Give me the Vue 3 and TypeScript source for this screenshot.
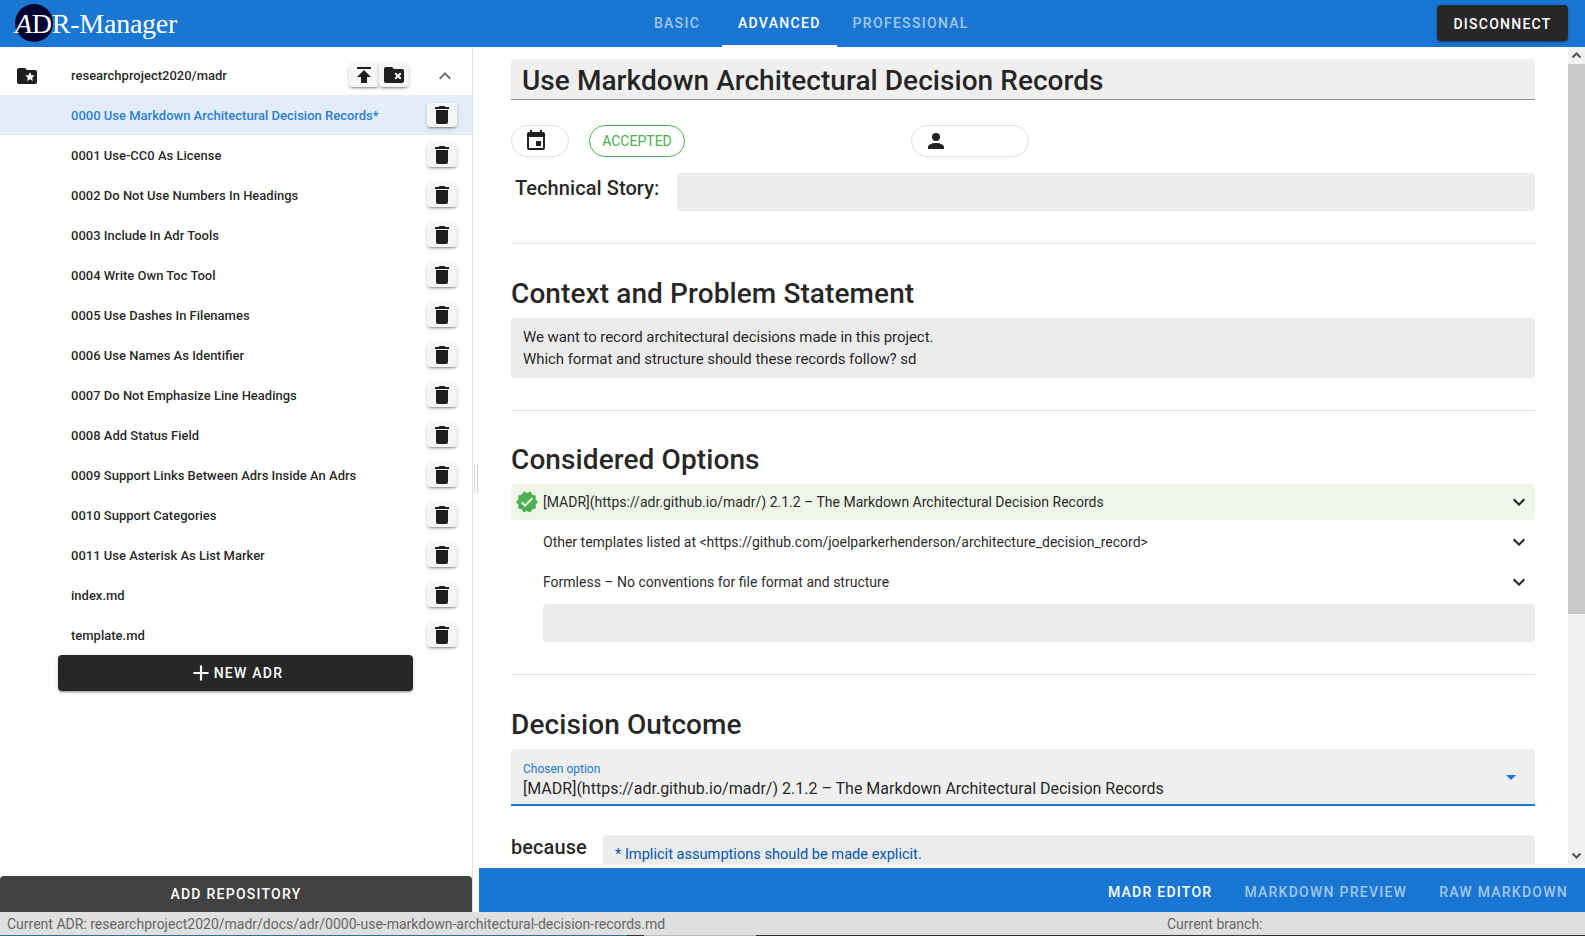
<template>
  <div class="app">
    <header class="topbar">
      <div class="logo"><span class="logo-disc"></span><span class="logo-text"><em>A</em>DR-Manager</span></div>
      <nav class="tabs">
        <a v-for="tab in modes" :key="tab" class="tab" :class="{ active: tab === 'ADVANCED' }">{{ tab }}</a>
      </nav>
      <button class="dark-btn disconnect">DISCONNECT</button>
    </header>

    <div class="workspace">
      <aside class="sidebar">
        <div class="repo-row">
          <svg class="repo-icon" viewBox="0 0 24 24"><path :d="icons.folderStar" /></svg>
          <span class="repo-name">researchproject2020/madr</span>
          <button class="mini-btn"><svg viewBox="0 0 24 24"><path :d="icons.publish" /></svg></button>
          <button class="mini-btn"><svg viewBox="0 0 24 24"><path :d="icons.folderRemove" /></svg></button>
          <svg class="repo-chevron" viewBox="0 0 24 24"><path :d="icons.chevronUp" /></svg>
        </div>
        <ul class="adr-list">
          <li v-for="(file, i) in files" :key="file" class="adr-row" :class="{ current: i === 0 }">
            <span>{{ file }}</span>
            <button class="mini-btn"><svg viewBox="0 0 24 24"><path :d="icons.trash" /></svg></button>
          </li>
        </ul>
        <button class="dark-btn new-adr">
          <svg viewBox="0 0 24 24"><path :d="icons.plus" /></svg>
          NEW ADR
        </button>
        <button class="add-repo">ADD REPOSITORY</button>
      </aside>

      <div class="splitter"><i></i></div>

      <main class="main">
        <div class="viewport">
          <div class="editor">
            <div class="title-field">Use Markdown Architectural Decision Records</div>

            <div class="chips">
              <span class="chip date"><svg viewBox="0 0 24 24"><path :d="icons.calendar" /></svg></span>
              <span class="chip status">ACCEPTED</span>
              <span class="chip person"><svg viewBox="0 0 24 24"><path :d="icons.account" /></svg></span>
            </div>

            <div class="story">
              <span class="label">Technical Story:</span>
              <div class="field blank"></div>
            </div>

            <hr />

            <h2>Context and Problem Statement</h2>
            <div class="field context">
              We want to record architectural decisions made in this project.<br />
              Which format and structure should these records follow? sd
            </div>

            <hr />

            <h2 class="options-title">Considered Options</h2>
            <div
              v-for="(opt, i) in options"
              :key="opt"
              class="option"
              :class="{ chosen: i === 0 }"
            >
              <svg v-if="i === 0" class="check" viewBox="0 0 24 24"><path :d="icons.decagram" /></svg>
              <span>{{ opt }}</span>
              <svg class="expand" viewBox="0 0 24 24"><path :d="icons.chevronDown" /></svg>
            </div>
            <div class="field blank new-option"></div>

            <hr />

            <h2>Decision Outcome</h2>
            <div class="select">
              <div>
                <div class="select-label">Chosen option</div>
                <div class="select-value">{{ options[0] }}</div>
              </div>
              <svg viewBox="0 0 24 24"><path :d="icons.menuDown" /></svg>
            </div>

            <div class="because">
              <span class="label">because</span>
              <div class="field explain">* Implicit assumptions should be made explicit.</div>
            </div>
          </div>

          <div class="scrollbar">
            <svg class="arrow" viewBox="0 0 17 17"><path d="M4.5 10.5 8.5 6.5 12.5 10.5" /></svg>
            <div class="thumb"></div>
            <svg class="arrow bottom" viewBox="0 0 17 17"><path d="M4.5 6.5 8.5 10.5 12.5 6.5" /></svg>
          </div>
        </div>

        <footer class="view-tabs">
          <a
            v-for="view in views"
            :key="view"
            class="view-tab"
            :class="{ active: view === 'MADR EDITOR' }"
          >{{ view }}</a>
        </footer>
      </main>
    </div>

    <div class="statusbar">
      <span class="status-adr">Current ADR: researchproject2020/madr/docs/adr/0000-use-markdown-architectural-decision-records.md</span>
      <span>Current branch:</span>
    </div>
    <div class="desk-strip"></div>
  </div>
</template>

<script setup lang="ts">
const modes: string[] = ['BASIC', 'ADVANCED', 'PROFESSIONAL']
const views: string[] = ['MADR EDITOR', 'MARKDOWN PREVIEW', 'RAW MARKDOWN']

const files: string[] = [
  '0000 Use Markdown Architectural Decision Records*',
  '0001 Use-CC0 As License',
  '0002 Do Not Use Numbers In Headings',
  '0003 Include In Adr Tools',
  '0004 Write Own Toc Tool',
  '0005 Use Dashes In Filenames',
  '0006 Use Names As Identifier',
  '0007 Do Not Emphasize Line Headings',
  '0008 Add Status Field',
  '0009 Support Links Between Adrs Inside An Adrs',
  '0010 Support Categories',
  '0011 Use Asterisk As List Marker',
  'index.md',
  'template.md',
]

const options: string[] = [
  '[MADR](https://adr.github.io/madr/) 2.1.2 – The Markdown Architectural Decision Records',
  'Other templates listed at <https://github.com/joelparkerhenderson/architecture_decision_record>',
  'Formless – No conventions for file format and structure',
]

const icons = {
  trash: 'M19,4H15.5L14.5,3H9.5L8.5,4H5V6H19M6,19A2,2 0 0,0 8,21H16A2,2 0 0,0 18,19V7H6V19Z',
  calendar: 'M19,19H5V8H19M16,1V3H8V1H6V3H5C3.89,3 3,3.89 3,5V19A2,2 0 0,0 5,21H19A2,2 0 0,0 21,19V5C21,3.89 20.1,3 19,3H18V1M17,12H12V17H17V12Z',
  account: 'M12,4A4,4 0 0,1 16,8A4,4 0 0,1 12,12A4,4 0 0,1 8,8A4,4 0 0,1 12,4M12,14C16.42,14 20,15.79 20,18V20H4V18C4,15.79 7.58,14 12,14Z',
  folderStar: 'M20,6H12L10,4H4A2,2 0 0,0 2,6V18A2,2 0 0,0 4,20H20A2,2 0 0,0 22,18V8A2,2 0 0,0 20,6M17.94,17L15,15.28L12.06,17L12.84,13.67L10.25,11.43L13.66,11.14L15,8L16.34,11.14L19.75,11.43L17.16,13.67L17.94,17Z',
  folderRemove: 'M10 4L12 6H20C21.1 6 22 6.9 22 8V18C22 19.1 21.1 20 20 20H4C2.9 20 2 19.1 2 18L2 6C2 4.9 2.9 4 4 4H10M12.46 10.88L14.59 13L12.46 15.12L13.88 16.54L16 14.41L18.12 16.54L19.54 15.12L17.41 13L19.54 10.88L18.12 9.46L16 11.59L13.88 9.46L12.46 10.88Z',
  publish: 'M5,4V6H19V4H5M5,14H9V20H15V14H19L12,7L5,14Z',
  chevronUp: 'M7.41,15.41L12,10.83L16.59,15.41L18,14L12,8L6,14L7.41,15.41Z',
  chevronDown: 'M7.41,8.58L12,13.17L16.59,8.58L18,10L12,16L6,10L7.41,8.58Z',
  decagram: 'M23,12L20.56,9.22L20.9,5.54L17.29,4.72L15.4,1.54L12,3L8.6,1.54L6.71,4.71L3.1,5.53L3.44,9.21L1,12L3.44,14.78L3.1,18.47L6.71,19.29L8.6,22.47L12,21L15.4,22.46L17.29,19.28L20.9,18.46L20.56,14.78L23,12M10,17L6,13L7.41,11.59L10,14.17L16.59,7.58L18,9L10,17Z',
  menuDown: 'M7,10L12,15L17,10H7Z',
  plus: 'M19,13H13V19H11V13H5V11H11V5H13V11H19V13Z',
}
</script>

<style>
html,
body {
  margin: 0;
  overflow: hidden;
}
</style>

<style scoped>
.app {
  width: 1585px;
  height: 936px;
  display: flex;
  flex-direction: column;
  overflow: hidden;
  font-family: Roboto, "Liberation Sans", sans-serif;
  color: rgba(0, 0, 0, 0.87);
  background: #fff;
}

button {
  font-family: inherit;
  border: 0;
  padding: 0;
  cursor: pointer;
}

/* Top bar */

.topbar {
  height: 47px;
  flex: none;
  display: grid;
  grid-template-columns: 632px auto 1fr;
  align-items: center;
  background: #1976d2;
}

.logo {
  position: relative;
  padding-left: 15px;
  height: 47px;
  display: flex;
  align-items: center;
}

.logo-disc {
  position: absolute;
  left: 15px;
  top: 4px;
  width: 38px;
  height: 38px;
  border-radius: 50%;
  background: #02022e;
}

.logo-text {
  position: relative;
  font-family: "Liberation Serif", serif;
  font-size: 28px;
  letter-spacing: -0.25px;
  color: #fff;
  white-space: nowrap;
}

.tabs {
  display: flex;
  height: 47px;
}

.tab {
  display: flex;
  align-items: center;
  justify-content: center;
  min-width: 90px;
  box-sizing: border-box;
  padding: 0 16px 1px;
  font-size: 14px;
  font-weight: 500;
  letter-spacing: 1.3px;
  color: rgba(255, 255, 255, 0.6);
}

.tab.active {
  color: #fff;
  box-shadow: inset 0 -2px 0 #fff;
}

.dark-btn {
  background: #272727;
  color: #fff;
  border-radius: 4px;
  font-size: 14px;
  font-weight: 500;
  letter-spacing: 1.25px;
  box-shadow: 0 3px 1px -2px rgba(0, 0, 0, 0.2), 0 2px 2px 0 rgba(0, 0, 0, 0.14), 0 1px 5px 0 rgba(0, 0, 0, 0.12);
}

.disconnect {
  justify-self: end;
  width: 131px;
  height: 36px;
  margin-right: 17px;
  margin-top: -1px;
  padding-top: 1px;
}

/* Sidebar */

.workspace {
  flex: 1;
  min-height: 0;
  display: flex;
}

.sidebar {
  width: 473px;
  flex: none;
  box-sizing: border-box;
  border-right: 1px solid #e4e4e4;
  display: flex;
  flex-direction: column;
}

.repo-row {
  height: 48px;
  flex: none;
  display: flex;
  align-items: center;
  padding: 9px 0 0 15px;
  box-sizing: border-box;
  font-size: 13px;
  font-weight: 500;
}

.repo-icon {
  width: 24px;
  height: 24px;
  fill: #1e1e1e;
  margin-right: 32px;
}

.repo-name {
  flex: 1;
}

.mini-btn {
  width: 30px;
  height: 24px;
  display: flex;
  align-items: center;
  justify-content: center;
  background: #f5f5f5;
  border-radius: 4px;
  box-shadow: 0 3px 1px -2px rgba(0, 0, 0, 0.2), 0 2px 2px 0 rgba(0, 0, 0, 0.14), 0 1px 5px 0 rgba(0, 0, 0, 0.12);
}

.mini-btn svg {
  width: 24px;
  height: 24px;
  fill: #1e1e1e;
}

.repo-row .mini-btn {
  margin-top: -1px;
}

.repo-chevron {
  width: 24px;
  height: 24px;
  fill: #6f6f6f;
  margin: 0 15px 0 24px;
}

.adr-list {
  list-style: none;
  margin: 0;
  padding: 0;
}

.adr-row {
  height: 40px;
  display: flex;
  align-items: center;
  justify-content: space-between;
  padding: 0 15px 0 71px;
  font-size: 13px;
  font-weight: 500;
}

.adr-row.current {
  background: #e3edf9;
  color: #2c7fd6;
}

.new-adr {
  flex: none;
  align-self: flex-start;
  width: 355px;
  height: 36px;
  margin-left: 58px;
  display: flex;
  align-items: center;
  justify-content: center;
}

.new-adr svg {
  width: 26px;
  height: 26px;
  fill: #fff;
}

.add-repo {
  margin-top: auto;
  height: 36px;
  flex: none;
  background: #424242;
  color: #fff;
  border-radius: 4px 4px 0 0;
  font-size: 14px;
  font-weight: 500;
  letter-spacing: 1.25px;
}

/* Splitter between the panes */

.splitter {
  width: 6px;
  flex: none;
  display: flex;
  align-items: center;
  justify-content: center;
}

.splitter i {
  display: block;
  width: 2px;
  height: 29px;
  border-left: 1px solid #d8d8d8;
  border-right: 1px solid #d8d8d8;
}

/* Editor */

.main {
  flex: 1;
  min-width: 0;
  display: flex;
  flex-direction: column;
}

.viewport {
  flex: 1;
  min-height: 0;
  display: flex;
  overflow: hidden;
  box-shadow: 0 2px 4px rgba(0, 0, 0, 0.06);
  margin-bottom: 4px;
}

.editor {
  flex: 1;
  min-width: 0;
  padding: 12px 33px 0 32px;
  overflow: hidden;
}

.title-field {
  height: 41px;
  box-sizing: border-box;
  padding-left: 11px;
  background: #efefef;
  border-bottom: 1px solid #8c8c8c;
  border-radius: 4px 4px 0 0;
  font-size: 28px;
  font-weight: 500;
  line-height: 44px;
  letter-spacing: 0.05px;
}

.chips {
  display: flex;
  margin-top: 25px;
}

.chip {
  height: 32px;
  box-sizing: border-box;
  display: flex;
  align-items: center;
  border: 1px solid #e0e0e0;
  border-radius: 16px;
  font-size: 14px;
}

.chip svg {
  width: 24px;
  height: 24px;
  fill: #212121;
}

.chip.date {
  width: 58px;
  padding-left: 12px;
}

.chip.status {
  margin-left: 20px;
  width: 96px;
  justify-content: center;
  border-color: #4caf50;
  color: #4caf50;
}

.chip.person {
  margin-left: 226px;
  width: 118px;
  padding-left: 12px;
}

.story {
  display: flex;
  align-items: center;
  margin-top: 16px;
  padding-left: 4px;
}

.label {
  font-size: 20px;
  font-weight: 500;
  letter-spacing: 0.07px;
  white-space: nowrap;
}

.story .label {
  width: 162px;
  flex: none;
  padding-bottom: 8px;
}

.field {
  background: #ececec;
  border-radius: 4px;
  box-sizing: border-box;
}

.blank {
  height: 38px;
}

.story .blank {
  flex: 1;
}

hr {
  border: 0;
  border-top: 1px solid #e0e0e0;
  margin: 32px 0 0;
}

h2 {
  margin: 30px 0 0;
  height: 40px;
  font-size: 28px;
  font-weight: 500;
  line-height: 40px;
  letter-spacing: 0.1px;
}

.options-title {
  margin-top: 29px;
}

.context {
  margin-top: 4px;
  height: 60px;
  padding: 8px 12px;
  font-size: 15px;
  letter-spacing: -0.07px;
  line-height: 22px;
}

.option {
  height: 36px;
  margin-top: 4px;
  display: flex;
  align-items: center;
  padding-left: 32px;
  border-radius: 4px;
  position: relative;
  font-size: 14px;
}

.option.chosen {
  background: #eff6e9;
}

.check {
  position: absolute;
  left: 4px;
  top: 6px;
  width: 24px;
  height: 24px;
  fill: #4caf50;
}

.expand {
  width: 24px;
  height: 24px;
  margin-left: auto;
  margin-right: 4px;
  fill: #212121;
}

.new-option {
  margin: 4px 0 0 32px;
}

.select {
  margin-top: 4px;
  height: 57px;
  box-sizing: border-box;
  padding: 13px 12px 0;
  background: #efefef;
  border-bottom: 2px solid #1976d2;
  border-radius: 4px 4px 0 0;
  display: flex;
  justify-content: space-between;
}

.select-label {
  font-size: 12px;
  line-height: 14px;
  color: #1976d2;
}

.select-value {
  font-size: 16px;
  line-height: 22px;
  margin-top: 2px;
}

.select svg {
  width: 24px;
  height: 24px;
  fill: #1976d2;
  margin-top: 3px;
}

.because {
  display: flex;
  margin-top: 29px;
}

.because .label {
  width: 92px;
  flex: none;
  line-height: 24px;
}

.explain {
  flex: 1;
  height: 60px;
  padding: 9px 12px;
  font-size: 14.6px;
  line-height: 20px;
  color: #0056b3;
}

/* Scrollbar drawn by hand so it looks the same in any browser */

.scrollbar {
  width: 17px;
  flex: none;
  background: #f1f1f1;
  display: flex;
  flex-direction: column;
}

.arrow {
  width: 17px;
  height: 17px;
  flex: none;
  fill: none;
  stroke: #505050;
  stroke-width: 2;
}

.arrow.bottom {
  margin-top: auto;
}

.thumb {
  height: 550px;
  background: #c9c9c9;
}

/* Bottom view switcher */

.view-tabs {
  height: 44px;
  flex: none;
  box-sizing: border-box;
  padding: 3px 17px 0 0;
  display: flex;
  align-items: center;
  justify-content: flex-end;
  gap: 32px;
  background: #1976d2;
}

.view-tab {
  font-size: 14px;
  font-weight: 500;
  letter-spacing: 1.25px;
  color: rgba(255, 255, 255, 0.6);
}

.view-tab.active {
  color: #fff;
}

.statusbar {
  height: 23px;
  flex: none;
  display: flex;
  align-items: center;
  padding-left: 7px;
  box-sizing: border-box;
  background: #dfdfdf;
  font-size: 14px;
  color: #666;
}

.status-adr {
  width: 1160px;
  flex: none;
}

/* One pixel of whatever sat behind the window */

.desk-strip {
  height: 1px;
  flex: none;
  background: linear-gradient(
    to right,
    #2e6f8c 0 627px,
    #333 627px 644px,
    #bbb 644px 756px,
    #333 756px
  );
}
</style>
